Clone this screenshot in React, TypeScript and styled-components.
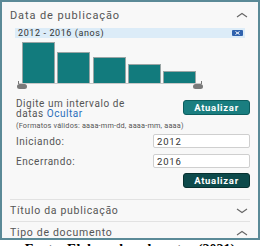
import React from 'react'
import styled, { createGlobalStyle } from 'styled-components'

const GlobalStyle = createGlobalStyle`
  body {
    margin: 0;
    background: #fff;
    font-family: Roboto, "Liberation Sans", Arial, sans-serif;
  }
`

const Page = styled.div`
  width: 260px;
  height: 246px;
  overflow: hidden;
`

const Frame = styled.div`
  box-sizing: border-box;
  width: 260px;
  height: 240px;
  border: 2px solid #5b8a97;
  background: #f8f8f8;
  padding: 0 8px;
  overflow: hidden;
`

const Header = styled.div`
  display: flex;
  align-items: center;
  justify-content: space-between;
  height: 26px;
  font-size: 11px;
  letter-spacing: 0.9px;
  color: #555;
`

const Chevron = styled.svg`
  width: 12px;
  height: 6px;
  margin-right: 2px;
`

const RangeBar = styled.div`
  display: flex;
  align-items: center;
  justify-content: space-between;
  height: 10px;
  margin: 0 5px;
  padding: 0 2px 0 3px;
  background: #dcecf8;
  font-size: 9px;
  letter-spacing: 0.6px;
  color: #333;
`

const CloseBadge = styled.span`
  display: flex;
  align-items: center;
  justify-content: center;
  width: 11px;
  height: 6px;
  background: #2f62ad;
  border-radius: 1px;
`

const Chart = styled.svg`
  display: block;
  width: 240px;
  height: 56px;
`

const RangeRow = styled.div`
  display: flex;
  justify-content: space-between;
  align-items: flex-start;
  margin-top: 5px;
  padding-left: 6px;
`

const Hint = styled.div`
  font-size: 10px;
  line-height: 10px;
  letter-spacing: 0.55px;
  color: #555;
`

const HideLink = styled.a`
  color: #2a6ebb;
  text-decoration: none;
`

const UpdateButton = styled.button<{ $dark?: boolean }>`
  box-sizing: border-box;
  width: 67px;
  height: 15px;
  padding: 0;
  margin-top: ${p => (p.$dark ? 0 : 1)}px;
  border: 1px solid ${p => (p.$dark ? '#07302f' : '#0c5d5e')};
  border-radius: 3px;
  background: ${p => (p.$dark ? '#0d4a4b' : '#1a7e80')};
  color: #fff;
  font-family: Roboto, "Liberation Sans", Arial, sans-serif;
  font-size: 9.5px;
  font-weight: bold;
  letter-spacing: 0.7px;
`

const Note = styled.div`
  margin-top: 2px;
  padding-left: 6px;
  font-size: 7.3px;
  line-height: 9px;
  letter-spacing: 0.2px;
  color: #555;
`

const FieldRow = styled.div<{ $gap: number }>`
  display: flex;
  align-items: center;
  justify-content: space-between;
  margin-top: ${p => p.$gap}px;
  padding-left: 6px;
`

const FieldLabel = styled.span`
  font-size: 10px;
  letter-spacing: 0.55px;
  color: #555;
`

const FieldInput = styled.input`
  box-sizing: border-box;
  width: 97px;
  height: 14px;
  padding: 0 3px;
  border: 1px solid #cfcfcf;
  border-radius: 2px;
  background: #fff;
  font-family: Roboto, "Liberation Sans", Arial, sans-serif;
  font-size: 9.5px;
  letter-spacing: 0.8px;
  color: #333;
`

const ButtonRow = styled.div`
  display: flex;
  justify-content: flex-end;
  margin-top: 5px;
`

const Collapsed = styled.div<{ $first?: boolean }>`
  display: flex;
  align-items: center;
  justify-content: space-between;
  height: 21px;
  margin-top: ${p => (p.$first ? 11 : 0)}px;
  border-top: 1px solid #e2e2e2;
  font-size: 10.5px;
  letter-spacing: 0.7px;
  color: #555;
`

const Caption = styled.div`
  padding-top: 3px;
  text-align: center;
  font-family: "Liberation Serif", "Times New Roman", serif;
  font-weight: bold;
  font-size: 14px;
  line-height: 14px;
  color: #000;
`

const bars = [
  { x: 12, top: 4 },
  { x: 47, top: 14 },
  { x: 83, top: 19 },
  { x: 118, top: 26 },
  { x: 153, top: 33 },
]

function ChevronIcon({ up }: { up?: boolean }) {
  return (
    <Chevron viewBox="0 0 12 6">
      <polyline
        points={up ? '1,5 6,1.5 11,5' : '1,1 6,4.5 11,1'}
        fill="none"
        stroke="#666"
        strokeWidth="1.1"
      />
    </Chevron>
  )
}

function Histogram() {
  return (
    <Chart viewBox="0 0 240 56">
      {bars.map(bar => (
        <rect
          key={bar.x}
          x={bar.x + 0.5}
          y={bar.top + 0.5}
          width={32}
          height={45 - bar.top}
          fill="#127b7d"
          stroke="#9aa5a5"
          strokeWidth="1"
        />
      ))}
      <line x1="8" y1="45.5" x2="192" y2="45.5" stroke="#c8c8c8" strokeWidth="1" />
      <line x1="8.5" y1="43" x2="8.5" y2="46" stroke="#777" strokeWidth="1" />
      <line x1="191.5" y1="43" x2="191.5" y2="46" stroke="#777" strokeWidth="1" />
      <rect x="7" y="46" width="10" height="5" rx="2.5" fill="#7a7a7a" />
      <rect x="183" y="46" width="10" height="5" rx="2.5" fill="#7a7a7a" />
    </Chart>
  )
}

export default function App() {
  return (
    <Page>
      <GlobalStyle />
      <Frame>
        <Header>
          <span>Data de publicação</span>
          <ChevronIcon up />
        </Header>
        <RangeBar>
          <span>2012 - 2016 (anos)</span>
          <CloseBadge>
            <svg width="5" height="4" viewBox="0 0 5 4">
              <path d="M0.5 0.5 L4.5 3.5 M4.5 0.5 L0.5 3.5" stroke="#fff" strokeWidth="1" />
            </svg>
          </CloseBadge>
        </RangeBar>
        <Histogram />
        <RangeRow>
          <Hint>
            Digite um intervalo de
            <br />
            datas <HideLink href="#">Ocultar</HideLink>
          </Hint>
          <UpdateButton>Atualizar</UpdateButton>
        </RangeRow>
        <Note>(Formatos válidos: aaaa-mm-dd, aaaa-mm, aaaa)</Note>
        <FieldRow $gap={4}>
          <FieldLabel>Iniciando:</FieldLabel>
          <FieldInput defaultValue="2012" />
        </FieldRow>
        <FieldRow $gap={6}>
          <FieldLabel>Encerrando:</FieldLabel>
          <FieldInput defaultValue="2016" />
        </FieldRow>
        <ButtonRow>
          <UpdateButton $dark>Atualizar</UpdateButton>
        </ButtonRow>
        <Collapsed $first>
          <span>Título da publicação</span>
          <ChevronIcon />
        </Collapsed>
        <Collapsed>
          <span>Tipo de documento</span>
          <ChevronIcon up />
        </Collapsed>
      </Frame>
      <Caption>Fonte: Elaborado pelo autor (2021)</Caption>
    </Page>
  )
}
